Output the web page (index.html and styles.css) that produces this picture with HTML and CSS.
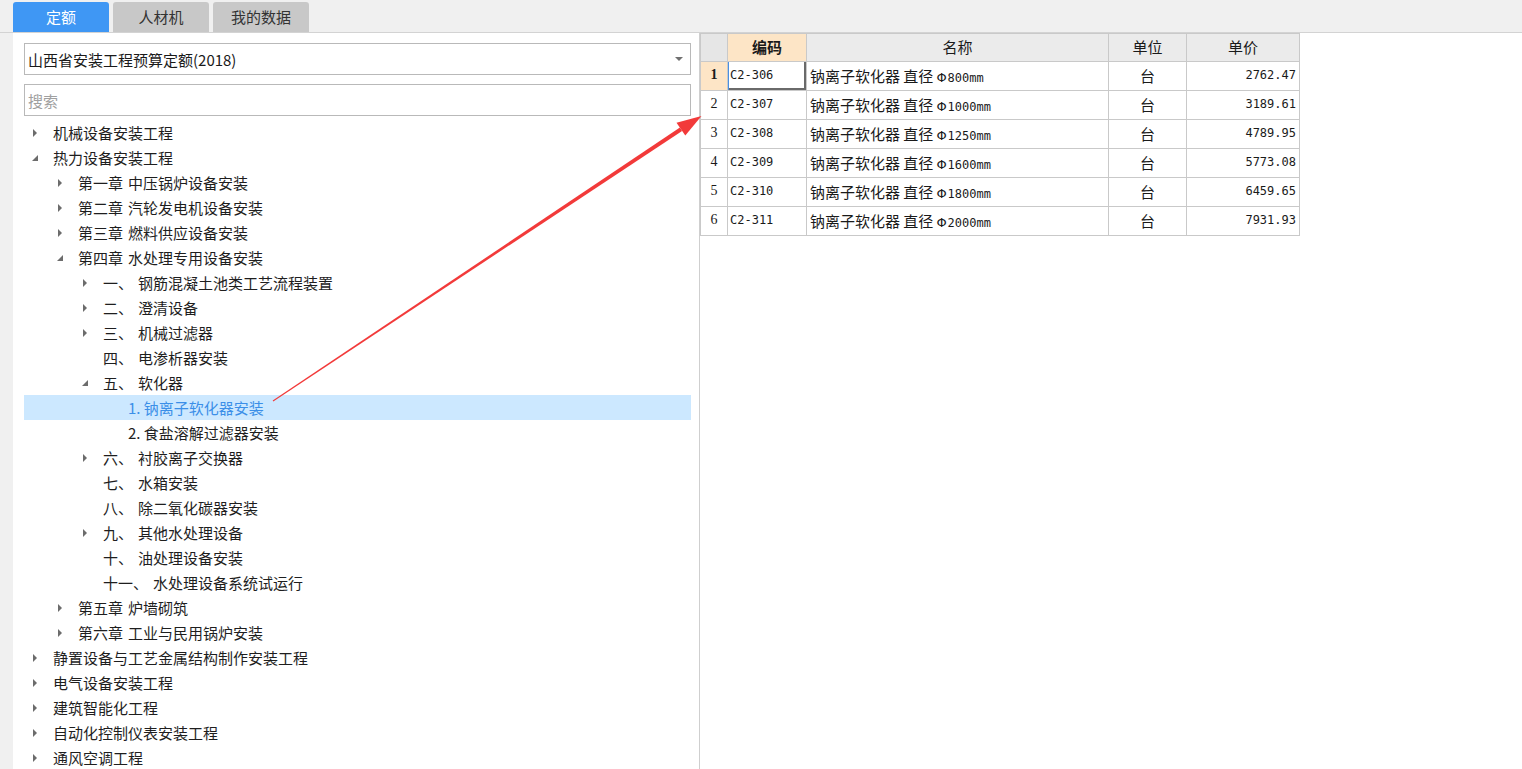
FILE: index.html
```html
<!DOCTYPE html>
<html lang="zh-CN">
<head>
<meta charset="utf-8">
<title>定额</title>
<link rel="stylesheet" href="styles.css">
</head>
<body>
<div class="app">
  <div class="tabbar">
    <div class="tab active">定额</div>
    <div class="tab">人材机</div>
    <div class="tab">我的数据</div>
  </div>
  <div class="main">
    <div class="gutter"></div>
    <div class="left">
      <div class="select"><span>山西省安装工程预算定额(2018)</span><span class="caret"></span></div>
      <div class="search">搜索</div>
      <ul class="tree">
        <li class="row l0"><i class="tw c"></i>机械设备安装工程</li>
        <li class="row l0"><i class="tw e"></i>热力设备安装工程</li>
        <li class="row l1"><i class="tw c"></i>第一章<b class="sp"></b>中压锅炉设备安装</li>
        <li class="row l1"><i class="tw c"></i>第二章<b class="sp"></b>汽轮发电机设备安装</li>
        <li class="row l1"><i class="tw c"></i>第三章<b class="sp"></b>燃料供应设备安装</li>
        <li class="row l1"><i class="tw e"></i>第四章<b class="sp"></b>水处理专用设备安装</li>
        <li class="row l2"><i class="tw c"></i>一、<b class="sp"></b>钢筋混凝土池类工艺流程装置</li>
        <li class="row l2"><i class="tw c"></i>二、<b class="sp"></b>澄清设备</li>
        <li class="row l2"><i class="tw c"></i>三、<b class="sp"></b>机械过滤器</li>
        <li class="row l2"><i class="tw"></i>四、<b class="sp"></b>电渗析器安装</li>
        <li class="row l2"><i class="tw e"></i>五、<b class="sp"></b>软化器</li>
        <li class="row l3 sel"><i class="tw"></i>1. 钠离子软化器安装</li>
        <li class="row l3"><i class="tw"></i>2. 食盐溶解过滤器安装</li>
        <li class="row l2"><i class="tw c"></i>六、<b class="sp"></b>衬胶离子交换器</li>
        <li class="row l2"><i class="tw"></i>七、<b class="sp"></b>水箱安装</li>
        <li class="row l2"><i class="tw"></i>八、<b class="sp"></b>除二氧化碳器安装</li>
        <li class="row l2"><i class="tw c"></i>九、<b class="sp"></b>其他水处理设备</li>
        <li class="row l2"><i class="tw"></i>十、<b class="sp"></b>油处理设备安装</li>
        <li class="row l2"><i class="tw"></i>十一、<b class="sp"></b>水处理设备系统试运行</li>
        <li class="row l1"><i class="tw c"></i>第五章<b class="sp"></b>炉墙砌筑</li>
        <li class="row l1"><i class="tw c"></i>第六章<b class="sp"></b>工业与民用锅炉安装</li>
        <li class="row l0"><i class="tw c"></i>静置设备与工艺金属结构制作安装工程</li>
        <li class="row l0"><i class="tw c"></i>电气设备安装工程</li>
        <li class="row l0"><i class="tw c"></i>建筑智能化工程</li>
        <li class="row l0"><i class="tw c"></i>自动化控制仪表安装工程</li>
        <li class="row l0"><i class="tw c"></i>通风空调工程</li>
      </ul>
    </div>
    <div class="right">
      <table class="grid">
        <colgroup>
          <col class="c-rh"><col class="c-code"><col class="c-name"><col class="c-unit"><col class="c-price">
        </colgroup>
        <thead>
          <tr><th class="corner"></th><th class="hl">编码</th><th>名称</th><th>单位</th><th>单价</th></tr>
        </thead>
        <tbody>
          <tr><td class="rh hl">1</td><td class="code focus">C2-306</td><td class="name"><span class="zh">钠离子软化器 直径</span><span class="phi">Φ</span>800mm</td><td class="unit">台</td><td class="price">2762.47</td></tr>
          <tr><td class="rh">2</td><td class="code">C2-307</td><td class="name"><span class="zh">钠离子软化器 直径</span><span class="phi">Φ</span>1000mm</td><td class="unit">台</td><td class="price">3189.61</td></tr>
          <tr><td class="rh">3</td><td class="code">C2-308</td><td class="name"><span class="zh">钠离子软化器 直径</span><span class="phi">Φ</span>1250mm</td><td class="unit">台</td><td class="price">4789.95</td></tr>
          <tr><td class="rh">4</td><td class="code">C2-309</td><td class="name"><span class="zh">钠离子软化器 直径</span><span class="phi">Φ</span>1600mm</td><td class="unit">台</td><td class="price">5773.08</td></tr>
          <tr><td class="rh">5</td><td class="code">C2-310</td><td class="name"><span class="zh">钠离子软化器 直径</span><span class="phi">Φ</span>1800mm</td><td class="unit">台</td><td class="price">6459.65</td></tr>
          <tr><td class="rh">6</td><td class="code">C2-311</td><td class="name"><span class="zh">钠离子软化器 直径</span><span class="phi">Φ</span>2000mm</td><td class="unit">台</td><td class="price">7931.93</td></tr>
        </tbody>
      </table>
    </div>
  </div>
  <svg class="annot" width="1522" height="769" viewBox="0 0 1522 769" aria-hidden="true">
    <polygon points="272.7,400.6 273.3,401.4 682.1,131.0 679.9,127.6" fill="#f23a3a"/>
    <polygon points="701.5,116 685.3,135.6 676.5,122.8" fill="#f23a3a"/>
  </svg>
</div>
</body>
</html>
```
FILE: styles.css
```css
* { box-sizing: border-box; }
html, body { margin: 0; padding: 0; }
body {
  width: 1522px;
  height: 769px;
  overflow: hidden;
  background: #f0f0f0;
  font-family: "Noto Sans CJK SC", "Noto Sans", sans-serif;
  font-size: 15px;
  color: #1e1e1e;
}
.app { position: relative; width: 1522px; height: 769px; display: flex; flex-direction: column; }

.tabbar {
  height: 33px;
  display: flex;
  align-items: flex-end;
  gap: 4px;
  padding-left: 13px;
  background: #f0f0f0;
  border-bottom: 1px solid #d3d3d3;
}
.tab {
  width: 96px;
  height: 30px;
  line-height: 30px;
  text-align: center;
  background: #c8c8c8;
  color: #333;
  border-radius: 3px 3px 0 0;
  font-size: 15px;
}
.tab.active { background: #3f97f4; color: #fff; }

.main { flex: 1; display: flex; overflow: hidden; }
.gutter { width: 13px; background: #f0f0f0; flex: none; }
.left {
  width: 687px;
  flex: none;
  background: #fff;
  border-right: 1px solid #cfcfcf;
  padding: 10px 8px 0 11px;
  overflow: hidden;
}
.select, .search {
  height: 32px;
  border: 1px solid #b9b9b9;
  display: flex;
  align-items: center;
  padding-left: 3px;
}
.select { justify-content: space-between; padding-right: 7px; color: #1a1a1a; }
.caret {
  width: 0; height: 0;
  border-left: 4px solid transparent;
  border-right: 4px solid transparent;
  border-top: 4px solid #707070;
}
.search { margin-top: 9px; color: #a0a0a0; }

.tree { list-style: none; margin: 4px 0 0; padding: 0; }
.row {
  height: 25px;
  display: flex;
  align-items: center;
  white-space: nowrap;
  padding-left: 5px;
}
.row.l1 { padding-left: 30px; }
.row.l2 { padding-left: 55px; }
.row.l3 { padding-left: 80px; }
.row.sel { background: #cce8ff; color: #3b8fe8; }
.tw {
  width: 14px;
  height: 10px;
  margin-right: 10px;
  flex: none;
  position: relative;
  display: inline-block;
}
.tw.c::before {
  content: "";
  position: absolute;
  left: 4px; top: 1px;
  border-top: 4px solid transparent;
  border-bottom: 4px solid transparent;
  border-left: 4px solid #6c6c6c;
}
.tw.e::before {
  content: "";
  position: absolute;
  left: 3px; top: 2px;
  border-left: 6px solid transparent;
  border-bottom: 6px solid #6c6c6c;
}
.sp { display: inline-block; width: 5px; }

.right { flex: 1; background: #fff; }
.grid {
  border-collapse: collapse;
  table-layout: fixed;
  width: 599px;
  font-family: "DejaVu Sans Mono", "Liberation Mono", "Noto Sans CJK SC", monospace;
  font-size: 12px;
  color: #1a1a1a;
}
.c-rh { width: 27px; }
.c-code { width: 79px; }
.c-name { width: 302px; }
.c-unit { width: 78px; }
.c-price { width: 113px; }
.grid th, .grid td {
  border: 1px solid #c9c9c9;
  height: 29px;
  padding: 0 0 2px;
  white-space: nowrap;
  overflow: hidden;
  vertical-align: middle;
}
.grid th { height: 28px; }
.grid th {
  background: #ebebeb;
  font-family: "Noto Sans CJK SC", sans-serif;
  font-size: 15px;
  font-weight: normal;
  text-align: center;
}
.grid th.hl { background: #fde5c6; font-weight: bold; }
.grid th.corner { background: #e6e6e6; }
.grid td.rh {
  text-align: center;
  font-family: "Liberation Serif", serif;
  font-size: 14px;
  background: #fff;
}
.grid td.rh.hl { background: #fde5c6; font-weight: bold; }
.grid td.code { padding-left: 2px; }
.grid td.code.focus { box-shadow: inset 1px 0 0 #4a90e2, inset -2px -2px 0 #6a6a6a; }
.grid td.name { padding-left: 3px; }
.zh { font-family: "Noto Sans CJK SC", sans-serif; font-size: 15px; margin-right: 3px; }
.phi { font-family: "DejaVu Sans", sans-serif; font-size: 13px; margin-right: 1px; }
.grid td.unit {
  text-align: center;
  font-family: "Noto Sans CJK SC", sans-serif;
  font-size: 15px;
}
.grid td.price { text-align: right; padding-right: 3px; }

.annot { position: absolute; left: 0; top: 0; pointer-events: none; }
```
